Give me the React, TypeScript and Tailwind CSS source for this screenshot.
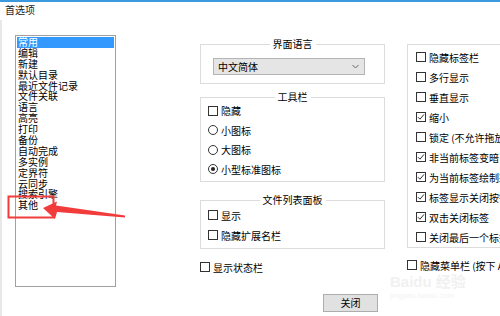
import React from 'react'

const categories = [
  '常用', '编辑', '新建', '默认目录', '最近文件记录', '文件关联', '语言', '高亮',
  '打印', '备份', '自动完成', '多实例', '定界符', '云同步', '搜索引擎', '其他',
]

const tabOptions: { label: string; checked: boolean }[] = [
  { label: '隐藏标签栏', checked: false },
  { label: '多行显示', checked: false },
  { label: '垂直显示', checked: false },
  { label: '缩小', checked: true },
  { label: '锁定 (不允许拖放)', checked: false },
  { label: '非当前标签变暗', checked: true },
  { label: '为当前标签绘制彩色条', checked: true },
  { label: '标签显示关闭按钮', checked: true },
  { label: '双击关闭标签', checked: true },
  { label: '关闭最后一个标签时退出', checked: false },
]

function CheckBox({ checked = false }: { checked?: boolean }) {
  return (
    <span className="w-[10px] h-[10px] border border-[#333] bg-white flex items-center justify-center shrink-0">
      {checked && (
        <svg width="8" height="8" viewBox="0 0 8 8">
          <path d="M1 4.2 L3 6.2 L7 1.4" stroke="#333" strokeWidth="1" fill="none" />
        </svg>
      )}
    </span>
  )
}

function Radio({ checked = false }: { checked?: boolean }) {
  return (
    <span className="w-[10px] h-[10px] rounded-full border border-[#333] bg-white flex items-center justify-center shrink-0">
      {checked && <span className="w-[4px] h-[4px] rounded-full bg-[#222]" />}
    </span>
  )
}

function Row({ children, h = 'h-[20px]' }: { children: React.ReactNode; h?: string }) {
  return <div className={`flex items-center gap-[3px] whitespace-nowrap ${h}`}>{children}</div>
}

export default function App() {
  return (
    <div
      className="relative w-[500px] h-[316px] overflow-hidden bg-white text-[10px] text-black"
      style={{ fontFamily: '"Noto Sans CJK SC", "Noto Sans", sans-serif' }}
    >
      {/* window top edge */}
      <div className="h-[2px] bg-[#3b99de]" />
      <div className="h-[18px] pl-[5px] pt-[2px] leading-[12px] text-[#222]">首选项</div>

      <div className="flex border-l-2 border-[#e8e8e8] h-[296px]">
        {/* category list */}
        <div className="ml-[13px] mt-[15px] w-[101px] h-[252px] border border-[#a0a0a0] p-[1px] shrink-0">
          {categories.map((c, i) => (
            <div
              key={c}
              className={`pl-[1px] leading-[10.9px] h-[10.9px] whitespace-nowrap ${
                i === 0 ? 'bg-[#3399ff] text-white' : ''
              }`}
            >
              {c}
            </div>
          ))}
        </div>

        {/* middle column */}
        <div className="ml-[84px] w-[185px] shrink-0 flex flex-col">
          <div className="mt-[24px] border border-[#dcdcdc] flex flex-col pb-[8px]">
            <span className="self-center -mt-[7px] bg-white px-[3px] leading-[12px]">界面语言</span>
            <div className="ml-[12px] mt-[8px] w-[152px] h-[17px] bg-[#e5e5e5] border border-[#b4b4b4] flex items-center justify-between pl-[4px] pr-[5px]">
              <span className="leading-[12px]">中文简体</span>
              <svg width="7" height="5" viewBox="0 0 7 5">
                <path d="M0.5 1 L3.5 4 L6.5 1" stroke="#666" strokeWidth="1" fill="none" />
              </svg>
            </div>
          </div>

          <div className="mt-[13px] border border-[#dcdcdc] flex flex-col pb-[2px]">
            <span className="self-center -mt-[7px] -mb-[2px] bg-white px-[3px] leading-[12px]">工具栏</span>
            <div className="pl-[7px]">
              <Row h="h-[19.5px]"><CheckBox /><span>隐藏</span></Row>
              <Row h="h-[19.5px]"><Radio /><span>小图标</span></Row>
              <Row h="h-[19.5px]"><Radio /><span>大图标</span></Row>
              <Row h="h-[19.5px]"><Radio checked /><span>小型标准图标</span></Row>
            </div>
          </div>

          <div className="mt-[18px] border border-[#dcdcdc] flex flex-col pb-[3px]">
            <span className="self-center -mt-[7px] -mb-[1px] bg-white px-[3px] leading-[12px]">文件列表面板</span>
            <div className="pl-[7px]">
              <Row><CheckBox /><span>显示</span></Row>
              <Row><CheckBox /><span>隐藏扩展名栏</span></Row>
            </div>
          </div>

          <div className="mt-[8px]">
            <Row><CheckBox /><span>显示状态栏</span></Row>
          </div>

          <button className="mt-[17px] ml-[123px] w-[55px] h-[18px] bg-[#e1e1e1] border border-[#adadad] flex items-center justify-center leading-[12px]">
            关闭
          </button>
        </div>

        {/* right column */}
        <div className="ml-[22px] w-[130px] shrink-0 flex flex-col">
          <div className="mt-[24px] border-l border-t border-b border-[#dcdcdc] pt-[2px] pl-[8px]">
            {tabOptions.map((o) => (
              <Row key={o.label}><CheckBox checked={o.checked} /><span>{o.label}</span></Row>
            ))}
          </div>
          <div className="mt-[7px]">
            <Row><CheckBox /><span>隐藏菜单栏 (按下 Alt 键显示)</span></Row>
          </div>
        </div>
      </div>

      {/* watermark */}
      <div className="absolute left-[390px] top-[274px] pointer-events-none select-none flex flex-col">
        <span className="text-[15px] font-bold leading-[16px] text-[#f1f1f1]" style={{ fontFamily: '"Liberation Sans", "Noto Sans CJK SC", sans-serif' }}>
          Baidu 经验
        </span>
        <span className="text-[8px] leading-[12px] text-[#f3f3f3]" style={{ fontFamily: '"Liberation Sans", sans-serif' }}>
          jingyan.baidu.com
        </span>
      </div>

      {/* red annotation */}
      <svg className="absolute left-0 top-0 pointer-events-none" width="500" height="316" viewBox="0 0 500 316">
        <rect x="8.5" y="196.5" width="45" height="21" fill="none" stroke="#f23c3c" strokeWidth="2" />
        <polygon
          points="43,208 57,201.5 56,205.5 125,215.5 125,217.5 57,212 55,219"
          fill="#f23c3c"
        />
      </svg>
    </div>
  )
}
